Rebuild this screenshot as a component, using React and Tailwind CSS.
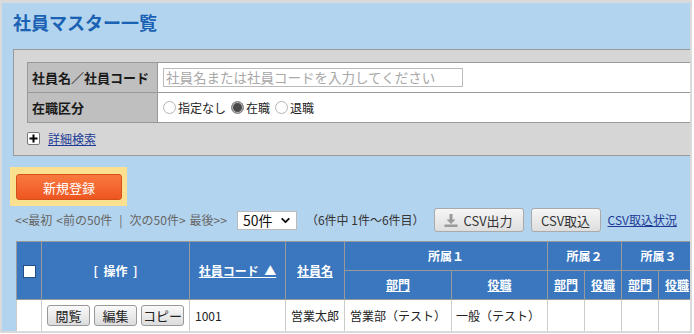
import React from "react";
import { ChevronDown } from "lucide-react";

function Radio({ checked }) {
  return (
    <span
      className={
        "inline-block w-[13px] h-[13px] rounded-full border " +
        (checked ? "border-[#888] bg-[#4a4a4a] shadow-[inset_0_0_0_1px_#bbb]" : "border-[#b5b5b5] bg-white")
      }
    />
  );
}

function SmallBtn({ children, w }) {
  return (
    <span
      className={
        "inline-flex items-center justify-center h-[21px] rounded-[3px] border border-[#999] bg-gradient-to-b from-[#fafafa] to-[#dcdcdc] text-[13px] leading-none text-[#222] " +
        w
      }
    >
      {children}
    </span>
  );
}

export default function App() {
  const th = "border border-[#999] bg-[#3a77be] text-white font-bold text-[12px] leading-none p-0";
  const td = "border border-[#ccc] bg-white text-[12px] leading-none text-[#222] p-0";
  return (
    <div className="[font-family:'Noto_Sans_CJK_JP',sans-serif] bg-white w-[694px] h-[334px]">
      <div className="w-[692px] h-[333px] border-t-[3px] border-x-2 border-b-2 border-[#dadada] bg-[#b3d4ee] overflow-hidden">
        {/* Title */}
        <div className="h-[46px] pl-[11px] pt-[7px] text-[18px] leading-[24px] font-bold text-[#1a62b3]">
          社員マスター一覧
        </div>

        {/* Search panel */}
        <div className="ml-[11px] w-[700px] h-[107px] border border-[#999] bg-[#d6d6d6] pt-[12px] pl-[13px]">
          <div className="w-[700px] border-t border-l border-[#999] bg-white">
            <div className="flex h-[30px] border-b border-[#999]">
              <div className="w-[130px] shrink-0 bg-[#bfbfbf] border-r border-[#999] flex items-center pl-[4px] text-[13px] font-bold text-[#1a1a1a]">
                社員名／社員コード
              </div>
              <div className="flex items-center pl-[5px]">
                <div className="w-[300px] h-[19px] border border-[#bbb] bg-white flex items-center pl-[2px] text-[13.5px] leading-none text-[#a8a8a8]">
                  社員名または社員コードを入力してください
                </div>
              </div>
            </div>
            <div className="flex h-[30px] border-b border-[#999]">
              <div className="w-[130px] shrink-0 bg-[#bfbfbf] border-r border-[#999] flex items-center pl-[4px] text-[13px] font-bold text-[#1a1a1a]">
                在職区分
              </div>
              <div className="flex items-center pl-[5px] text-[12px] leading-none text-[#222]">
                <Radio />
                <span className="ml-[2px] mr-[5px]">指定なし</span>
                <Radio checked />
                <span className="ml-[2px] mr-[5px]">在職</span>
                <Radio />
                <span className="ml-[2px]">退職</span>
              </div>
            </div>
          </div>
          <div className="h-[31px] flex items-center">
            <span className="w-[13px] h-[13px] rounded-[2px] border border-[#777] bg-white flex items-center justify-center">
              <svg width="9" height="9" viewBox="0 0 9 9">
                <rect x="3.5" y="0.5" width="2" height="8" fill="#000" />
                <rect x="0.5" y="3.5" width="8" height="2" fill="#000" />
              </svg>
            </span>
            <span className="ml-[8px] text-[12px] leading-none text-[#1d3b96] underline">詳細検索</span>
          </div>
        </div>

        {/* New button */}
        <div className="ml-[8px] mt-[11px] w-[117px] h-[39px] bg-[#fbe18f] pl-[6px] pt-[7px]">
          <div className="w-[106px] h-[26px] rounded-[3px] border border-[#d4521a] bg-gradient-to-b from-[#f9793f] to-[#ee5520] flex items-center justify-center text-[13px] leading-none text-white">
            新規登録
          </div>
        </div>

        {/* Pagination row */}
        <div className="mt-[1px] h-[26px] flex items-center pl-[13px] text-[12px] leading-none">
          <span className="text-[#666]">&lt;&lt;最初</span>
          <span className="text-[#666] ml-[4px]">&lt;前の50件</span>
          <span className="text-[#666] ml-[7px]">|</span>
          <span className="text-[#666] ml-[7px]">次の50件&gt;</span>
          <span className="text-[#666] ml-[4px]">最後&gt;&gt;</span>
          <div className="ml-[10px] w-[60px] h-[19px] border border-[#bbb] bg-white flex items-center justify-between pl-[5px] pr-[4px] text-[14px] text-[#111]">
            <span>50件</span>
            <ChevronDown size={13} strokeWidth={3.5} color="#111" />
          </div>
          <span className="ml-[9px] text-[#333]">（6件中 1件〜6件目）</span>
          <div className="ml-[9px] w-[90px] h-[24px] rounded-[3px] border border-[#aaa] bg-gradient-to-b from-[#f6f6f6] to-[#dedede] flex items-center justify-center gap-[5px] text-[13px] text-[#333]">
            <svg width="14" height="13" viewBox="0 0 14 13">
              <rect x="5.5" y="0" width="3" height="6" fill="#9a9a9a" />
              <path d="M2.5 5.5 L11.5 5.5 L7 10 Z" fill="#9a9a9a" />
              <rect x="0.5" y="10.5" width="13" height="2.5" fill="#9a9a9a" />
            </svg>
            <span>CSV出力</span>
          </div>
          <div className="ml-[7px] w-[70px] h-[24px] rounded-[3px] border border-[#aaa] bg-gradient-to-b from-[#f6f6f6] to-[#dedede] flex items-center justify-center text-[13px] text-[#333]">
            CSV取込
          </div>
          <span className="ml-[7px] text-[12px] text-[#1d3b96] underline">CSV取込状況</span>
        </div>

        {/* Table */}
        <table className="ml-[14px] mt-[8px] border-collapse table-fixed w-[679px]">
          <colgroup>
            <col className="w-[25px]" />
            <col className="w-[148px]" />
            <col className="w-[96px]" />
            <col className="w-[59px]" />
            <col className="w-[107px]" />
            <col className="w-[96px]" />
            <col className="w-[37px]" />
            <col className="w-[37px]" />
            <col className="w-[37px]" />
            <col className="w-[37px]" />
          </colgroup>
          <thead>
            <tr className="h-[29px]">
              <th rowSpan={2} className={th}>
                <span className="inline-block w-[13px] h-[13px] bg-white border border-[#244f86] align-middle" />
              </th>
              <th rowSpan={2} className={th}>[&nbsp;&nbsp;操作&nbsp;&nbsp;]</th>
              <th rowSpan={2} className={th}>
                <span className="underline">社員コード&nbsp;&nbsp;▲</span>
              </th>
              <th rowSpan={2} className={th}>
                <span className="underline">社員名</span>
              </th>
              <th colSpan={2} className={th}>所属１</th>
              <th colSpan={2} className={th}>所属２</th>
              <th colSpan={2} className={th}>所属３</th>
            </tr>
            <tr className="h-[29px]">
              <th className={th}><span className="underline">部門</span></th>
              <th className={th}><span className="underline">役職</span></th>
              <th className={th}><span className="underline">部門</span></th>
              <th className={th}><span className="underline">役職</span></th>
              <th className={th}><span className="underline">部門</span></th>
              <th className={th}><span className="underline">役職</span></th>
            </tr>
          </thead>
          <tbody>
            <tr className="h-[32px]">
              <td className={td}></td>
              <td className={td}>
                <div className="flex items-center justify-center gap-[4px]">
                  <SmallBtn w="w-[43px]">閲覧</SmallBtn>
                  <SmallBtn w="w-[43px]">編集</SmallBtn>
                  <SmallBtn w="w-[43px]">コピー</SmallBtn>
                </div>
              </td>
              <td className={td + " pl-[5px]"}>1001</td>
              <td className={td + " pl-[5px]"}>営業太郎</td>
              <td className={td + " pl-[5px]"}>営業部（テスト）</td>
              <td className={td + " pl-[4px]"}>一般（テスト）</td>
              <td className={td}></td>
              <td className={td}></td>
              <td className={td}></td>
              <td className={td}></td>
            </tr>
          </tbody>
        </table>
      </div>
    </div>
  );
}
